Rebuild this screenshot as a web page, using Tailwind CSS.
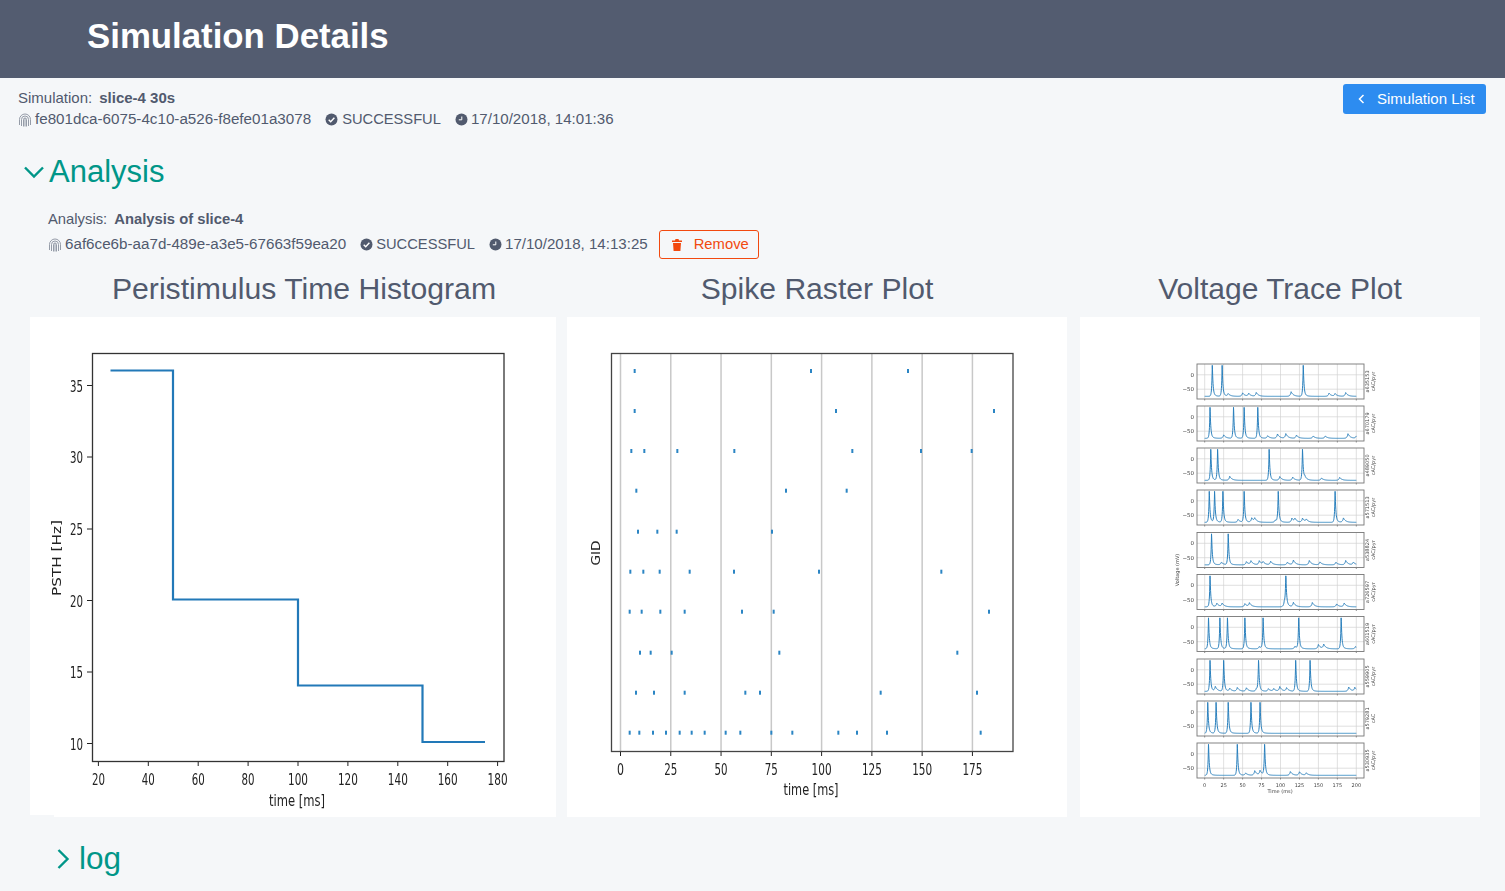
<!DOCTYPE html>
<html lang="en">

<head>
    <meta charset="UTF-8">
    <meta name="viewport" content="width=device-width, initial-scale=1.0">
    <script src="https://cdn.jsdelivr.net/npm/@tailwindcss/browser@4"></script>
    <title>Simulation Details</title>
</head>

<body class="bg-[#f5f7f9] font-['Liberation_Sans',Arial,sans-serif] text-[#515a6e] overflow-hidden">
    <div class="flex h-[78px] items-center bg-[#535c70] pb-[6px] pl-[87px]">
        <h1 class="text-[34.8px] font-bold text-white">Simulation Details</h1>
    </div>

    <div class="flex items-start justify-between pl-[18px] pr-[19px] pt-[6px]">
        <div class="pt-[4px]">
            <div class="flex h-[21px] items-center text-[15px]">
                <span>Simulation:</span><b class="ml-[7px]">slice-4 30s</b>
            </div>
            <div class="flex h-[21px] items-center text-[15px]">
                <svg class="mr-[3px] h-[14px] w-[14px] text-[#8a919e]" viewBox="0 0 14 14" fill="none" stroke="currentColor" stroke-width=".9">
                    <path d="M1.5 12V6.5a5.5 5.5 0 0 1 11 0V12M3.5 13V6.5a3.5 3.5 0 0 1 7 0V13M5.5 13.500V6.500a1.500 1.500 0 0 1 3 0v7M7 5.500v8" />
                </svg>
                <span class="text-[15.2px]">fe801dca-6075-4c10-a526-f8efe01a3078</span>
                <svg class="ml-[14px] mr-[4px] h-[13px] w-[13px]" viewBox="0 0 13 13">
                    <circle cx="6.500" cy="6.500" r="6" fill="#515a6e" />
                    <path d="M3.700 6.700l2 2 3.700-4" fill="none" stroke="#fff" stroke-width="1.400" />
                </svg>
                <span class="text-[14.7px]">SUCCESSFUL</span>
                <svg class="ml-[14px] mr-[3px] h-[13px] w-[13px]" viewBox="0 0 13 13">
                    <circle cx="6.500" cy="6.500" r="6" fill="#515a6e" />
                    <path d="M6.800 3.500v3.300H3.800" fill="none" stroke="#fff" stroke-width="1" />
                </svg>
                <span class="text-[15.1px]">17/10/2018, 14:01:36</span>
            </div>
        </div>
        <a href="#" class="flex h-[30px] w-[143px] items-center rounded-[3px] bg-[#2d8cf0] pl-[15px] text-[15px] text-white">
            <svg class="mr-[12px] h-[10px] w-[7px]" viewBox="0 0 7 10" fill="none" stroke="currentColor" stroke-width="1.500">
                <path d="M5.500 1L1.500 5l4 4" />
            </svg>
            Simulation List
        </a>
    </div>

    <div class="mt-[22px] flex h-[40px] items-center pl-[23px] text-[31px] text-[#009688]">
        <svg class="mr-[4px] h-[14px] w-[22px]" viewBox="0 0 22 14" fill="none" stroke="currentColor" stroke-width="2.400">
            <path d="M2 2.500l9 9 9-9" />
        </svg>
        Analysis
    </div>

    <div class="pl-[48px] pt-[17px]">
        <div class="flex h-[21px] items-center text-[14.8px]">
            <span>Analysis:</span><b class="ml-[7px]">Analysis of slice-4</b>
        </div>
        <div class="mt-[4px] flex h-[21px] items-center text-[15px]">
            <svg class="mr-[3px] h-[14px] w-[14px] text-[#8a919e]" viewBox="0 0 14 14" fill="none" stroke="currentColor" stroke-width=".9">
                <path d="M1.5 12V6.5a5.5 5.5 0 0 1 11 0V12M3.5 13V6.5a3.5 3.5 0 0 1 7 0V13M5.5 13.500V6.500a1.500 1.500 0 0 1 3 0v7M7 5.500v8" />
            </svg>
            <span class="text-[15.2px]">6af6ce6b-aa7d-489e-a3e5-67663f59ea20</span>
            <svg class="ml-[14px] mr-[3px] h-[13px] w-[13px]" viewBox="0 0 13 13">
                <circle cx="6.500" cy="6.500" r="6" fill="#515a6e" />
                <path d="M3.700 6.700l2 2 3.700-4" fill="none" stroke="#fff" stroke-width="1.400" />
            </svg>
            <span class="text-[14.7px]">SUCCESSFUL</span>
            <svg class="ml-[14px] mr-[3px] h-[13px] w-[13px]" viewBox="0 0 13 13">
                <circle cx="6.500" cy="6.500" r="6" fill="#515a6e" />
                <path d="M6.800 3.500v3.300H3.800" fill="none" stroke="#fff" stroke-width="1" />
            </svg>
            <span class="text-[15.1px]">17/10/2018, 14:13:25</span>
            <a href="#" class="ml-[11px] flex h-[29px] w-[100px] shrink-0 items-center rounded-[3px] border border-[#f2490f] pl-[12px] text-[14.8px] text-[#f2490f]">
                <svg class="mr-[12px] h-[12px] w-[10px]" viewBox="0 0 10 12" fill="currentColor">
                    <path d="M3.500 0h3l.5 1.500h3V3H0V1.500h3zM1 4h8l-.6 8H1.600z" />
                </svg>
                Remove
            </a>
        </div>
    </div>

    <div class="mt-[15px] flex pl-[54px]">
        <div class="mr-[11px] w-[502px]">
            <h2 class="h-[47px] pr-[2px] text-center text-[30.2px] leading-[38px]">Peristimulus Time Histogram</h2>
            <div class="h-[500px] bg-white">
                <svg id="psth" class="-ml-[24px] block h-[498px] w-[526px] bg-white blur-[.4px]" viewBox="30 317 526 498"></svg>
            </div>
        </div>
        <div class="mr-[13px] w-[500px]">
            <h2 class="h-[47px] text-center text-[30.1px] leading-[38px]">Spike Raster Plot</h2>
            <svg id="raster" class="block h-[500px] w-[500px] bg-white blur-[.4px]" viewBox="567 317 500 500"></svg>
        </div>
        <div class="w-[400px]">
            <h2 class="h-[47px] text-center text-[30px] leading-[38px]">Voltage Trace Plot</h2>
            <svg id="traces" class="block h-[500px] w-[400px] bg-white blur-[.5px]" viewBox="1080 317 400 500"></svg>
        </div>
    </div>

    <div class="mt-[22px] flex h-[40px] items-center pl-[56px] text-[31.5px] text-[#009688]">
        <svg class="mr-[9px] h-[22px] w-[14px]" viewBox="0 0 14 22" fill="none" stroke="currentColor" stroke-width="2.400">
            <path d="M2.500 2l9 9-9 9" />
        </svg>
        log
    </div>

    <script>
        const MPL = "'DejaVu Sans',sans-serif";
        const BLUE = '#2279b8';

        function label(x, y, str, size, len, anchor, extra) {
            let fit = len ? `textLength="${len}" lengthAdjust="spacingAndGlyphs"` : '';
            return `<text x="${x}" y="${y}" font-family="${MPL}" font-size="${size}" fill="#222" text-anchor="${anchor}" ${fit} ${extra || ''}>${str}</text>`;
        }

        // PSTH
        function drawPsth() {
            let html = '';
            [[35, 385.5], [30, 457], [25, 529], [20, 600.5], [15, 672], [10, 743.5]].forEach(([v, y]) => {
                html += `<path d="M87 ${y}h5" stroke="#222"/>`;
                html += label(83, y + 6, v, 16, 13, 'end');
            });
            for (let v = 20; v <= 180; v += 20) {
                let x = 298 + (v - 100) * 2.495;
                html += `<path d="M${x} 761v5" stroke="#222"/>`;
                html += label(x, 785, v, 16, v >= 100 ? 20 : 13, 'middle');
            }
            html += `<path d="M110.500 370.500H173V599.500H298V685.500H422.500V742H485" fill="none" stroke="${BLUE}" stroke-width="2.200"/>`;
            html += `<rect x="92.500" y="353.500" width="411.500" height="408" fill="none" stroke="#333" stroke-width="1.300"/>`;
            html += label(297, 806, 'time [ms]', 16, 56, 'middle');
            html += label(0, 0, 'PSTH [Hz]', 12.500, 76, 'middle', 'transform="translate(61 558) rotate(-90)"');
            document.getElementById('psth').innerHTML = html;
        }

        // Raster
        const rasterRows = [
            [194, 723, 1014],
            [194, 798, 1272],
            [184, 223, 322, 493, 847, 1053, 1205],
            [199, 648, 830],
            [204, 262, 320, 606],
            [181, 220, 269, 359, 492, 747, 1114],
            [179, 215, 271, 344, 516, 611, 1257],
            [210, 242, 305, 628, 1162],
            [198, 252, 344, 526, 570, 932, 1221],
            [179, 208, 249, 288, 329, 365, 404, 467, 511, 604, 667, 805, 861, 951, 1232],
        ];
        const rasterY = [371, 411, 451, 490.7, 531.7, 571.7, 611.7, 652.7, 692.7, 732.7];

        function drawRaster() {
            let html = '';
            for (let v = 0; v <= 175; v += 25) {
                let x = 620.5 + v * 2.011;
                html += `<path d="M${x} 353V751" stroke="#c8c8c8" stroke-width="1.500"/>`;
                html += `<path d="M${x} 751v5" stroke="#222"/>`;
                html += label(x, 775, v, 16, v >= 100 ? 20 : v ? 13 : 7, 'middle');
            }
            rasterRows.forEach((row, i) => {
                row.forEach(z => {
                    html += `<rect x="${570 + z / 3 - 1}" y="${rasterY[i] - 2}" width="2" height="4" fill="#2b85c4"/>`;
                });
            });
            html += `<rect x="611.500" y="353.500" width="401.500" height="398" fill="none" stroke="#444" stroke-width="1.300"/>`;
            html += label(811, 795, 'time [ms]', 16, 55, 'middle');
            html += label(0, 0, 'GID', 12.500, 25, 'middle', 'transform="translate(600 553) rotate(-90)"');
            document.getElementById('raster').innerHTML = html;
        }

        // Voltage traces: spikes and small bumps in ms, read off the plot
        const traces = [
            { id: 'a635153', type: 'cAC/pyr', top: 364, s: [10, 23, 130], b: [31, 50, 58, 68, 114, 164, 172, 186] },
            { id: 'a670179', type: 'cAC/pyr', top: 406, s: [7, 38, 52, 70], b: [25, 83, 96, 107, 121, 143, 159, 189, 200] },
            { id: 'a489050', type: 'cAC/pyr', top: 448, s: [8, 17, 85, 129], b: [33, 99, 116, 132, 154, 178] },
            { id: 'a571513', type: 'cAC/pyr', top: 490, s: [6, 13, 24, 52, 97, 172], b: [44, 62, 66, 93, 115, 119, 129, 134, 183] },
            { id: 'a538824', type: 'cAC/pyr', top: 532.500, s: [9, 31], b: [22, 55, 61, 72, 77, 87, 109, 117, 138, 152, 173, 186, 196] },
            { id: 'a726597', type: 'cAC/pyr', top: 574.500, s: [7, 107], b: [16, 23, 53, 59, 105, 117, 142, 174, 184] },
            { id: 'a601519', type: 'cAC/pyr', top: 616.500, s: [5, 20, 30, 53, 77, 124, 180], b: [72, 119, 150, 157, 199] },
            { id: 'a559905', type: 'cAC/pyr', top: 659, s: [7, 25, 71, 120, 139], b: [14, 33, 43, 55, 68, 84, 91, 99, 108, 190, 198] },
            { id: 'a579281', type: 'cAC', top: 701, s: [4, 15, 31, 61, 73], b: [] },
            { id: 'a530935', type: 'cAC/pyr', top: 743, s: [5, 43, 79], b: [54, 66, 73, 113, 125, 134] },
        ];

        function voltage(t, tr) {
            let v = -75;
            tr.s.forEach(s => {
                let d = t - s;
                v += d < 0 ? 110 * Math.exp(d / 0.7) : 110 * Math.exp(-d / 0.9) + 12 * Math.exp(-d / 3);
            });
            tr.b.forEach((b, i) => {
                let d = t - b;
                let h = 8 + (b * 7 + i * 5) % 9;
                v += d < 0 ? h * Math.exp(d / 1.2) : h * Math.exp(-d / 3);
            });
            return v;
        }

        function drawTraces() {
            let html = '';
            const x0 = 1204.700, k = 0.758, yk = 0.287;
            traces.forEach((tr) => {
                let top = tr.top, h = 35;
                for (let v = 0; v <= 200; v += 25) {
                    let x = x0 + v * k;
                    html += `<path d="M${x} ${top}v${h}" stroke="#d2d2d2" stroke-width=".7"/>`;
                    html += `<path d="M${x} ${top + h}v1.500" stroke="#444" stroke-width=".6"/>`;
                }
                [[0, 10.800], [-50, 25.200]].forEach(([v, dy]) => {
                    html += `<path d="M1197 ${top + dy}h167" stroke="#d2d2d2" stroke-width=".7"/>`;
                    html += `<text x="1194" y="${top + dy + 2}" font-family="${MPL}" font-size="5.500" fill="#444" text-anchor="end">${v ? '\u221250' : '0'}</text>`;
                });
                let d = '';
                for (let t = 0; t <= 200; t += 0.25) {
                    let v = Math.min(voltage(t, tr), 33);
                    d += (t ? 'L' : 'M') + (x0 + t * k).toFixed(2) + ' ' + (top + 10.800 - v * yk).toFixed(2);
                }
                html += `<path d="${d}" fill="none" stroke="#2a80bd" stroke-width="1"/>`;
                html += `<rect x="1197" y="${top}" width="167" height="${h}" fill="none" stroke="#777" stroke-width=".9"/>`;
                let sx = 1369, sy = top + h / 2;
                html += `<text font-family="${MPL}" font-size="5" fill="#444" text-anchor="middle" transform="translate(${sx} ${sy}) rotate(-90)">${tr.id}</text>`;
                html += `<text font-family="${MPL}" font-size="5" fill="#444" text-anchor="middle" transform="translate(${sx + 6} ${sy}) rotate(-90)">${tr.type}</text>`;
            });
            for (let v = 0; v <= 200; v += 25) {
                html += `<text x="${x0 + v * k}" y="787" font-family="${MPL}" font-size="5" fill="#444" text-anchor="middle">${v}</text>`;
            }
            html += `<text x="1280" y="793" font-family="${MPL}" font-size="5" fill="#444" text-anchor="middle">Time (ms)</text>`;
            html += `<text font-family="${MPL}" font-size="5" fill="#444" text-anchor="middle" transform="translate(1179 570) rotate(-90)">Voltage (mV)</text>`;
            document.getElementById('traces').innerHTML = html;
        }

        drawPsth();
        drawRaster();
        drawTraces();
    </script>
</body>

</html>
